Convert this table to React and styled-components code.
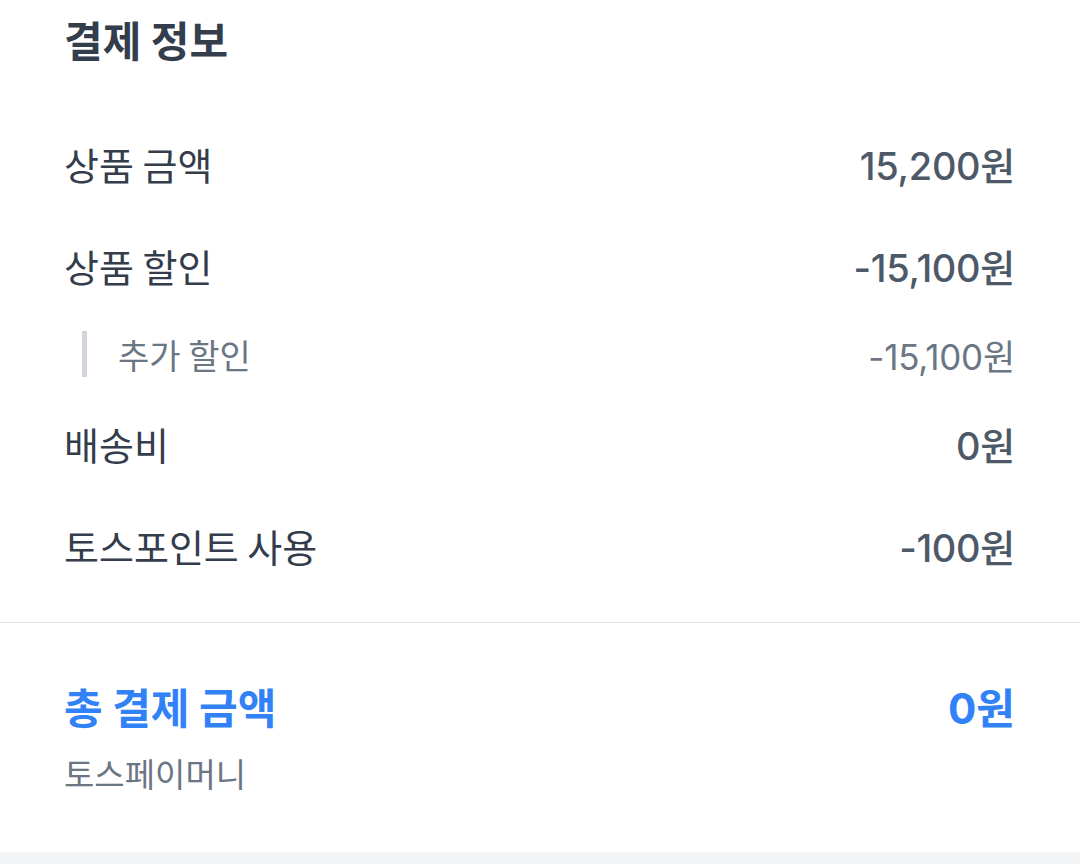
import React from "react";
import styled, { createGlobalStyle } from "styled-components";

const GlobalStyle = createGlobalStyle`
  body {
    margin: 0;
    background: #ffffff;
    font-family: "Noto Sans CJK KR", "Noto Sans", sans-serif;
    -webkit-font-smoothing: antialiased;
  }
`;

const numFont = `Inter, "Noto Sans CJK KR", sans-serif`;

const Page = styled.div`
  width: 1080px;
  background: #ffffff;
`;

const Section = styled.section`
  padding: 0 65px 26px 64px;
`;

const Title = styled.h2`
  margin: 0;
  font-size: 42px;
  line-height: 78px;
  font-weight: 700;
  color: #333d4b;
`;

const List = styled.div`
  padding-top: 34px;
  display: flex;
  flex-direction: column;
`;

const Row = styled.div`
  display: flex;
  align-items: center;
  justify-content: space-between;
  height: 102px;
`;

const Label = styled.span`
  font-size: 38px;
  font-weight: 400;
  color: #333d4b;
`;

const Value = styled.span`
  font-family: ${numFont};
  font-size: 38px;
  font-weight: 500;
  color: #4e5968;
  letter-spacing: -0.3px;
`;

const SubRow = styled.div`
  display: flex;
  align-items: center;
  justify-content: space-between;
  height: 76px;
  padding-left: 18px;
`;

const SubLabel = styled.span`
  display: flex;
  align-items: center;
  font-size: 34px;
  color: #6b7684;

  &::before {
    content: "";
    display: block;
    width: 5px;
    height: 46px;
    background: #d1d6db;
    margin-right: 31px;
  }
`;

const SubValue = styled.span`
  font-family: ${numFont};
  font-size: 35px;
  color: #6b7684;
  letter-spacing: -0.2px;
`;

const Divider = styled.hr`
  margin: 0;
  border: 0;
  border-top: 1px solid #e5e8eb;
`;

const Total = styled.section`
  padding: 56px 65px 59px 64px;
`;

const TotalRow = styled.div`
  display: flex;
  align-items: center;
  justify-content: space-between;
  height: 52px;
`;

const TotalText = styled.span`
  font-family: ${(p) => (p.$num ? numFont : "inherit")};
  font-size: 42px;
  font-weight: 700;
  color: #3182f6;
`;

const Method = styled.div`
  margin-top: 22px;
  font-size: 33px;
  line-height: 40px;
  color: #6b7684;
`;

const Gap = styled.div`
  height: 24px;
  background: #f2f4f6;
`;

const rows = [
  { label: "상품 금액", value: "15,200원" },
  { label: "상품 할인", value: "-15,100원", sub: { label: "추가 할인", value: "-15,100원" } },
  { label: "배송비", value: "0원" },
  { label: "토스포인트 사용", value: "-100원" },
];

export default function App() {
  return (
    <Page>
      <GlobalStyle />
      <Section>
        <Title>결제 정보</Title>
        <List>
          {rows.map((r) => (
            <React.Fragment key={r.label}>
              <Row>
                <Label>{r.label}</Label>
                <Value>{r.value}</Value>
              </Row>
              {r.sub && (
                <SubRow>
                  <SubLabel>{r.sub.label}</SubLabel>
                  <SubValue>{r.sub.value}</SubValue>
                </SubRow>
              )}
            </React.Fragment>
          ))}
        </List>
      </Section>
      <Divider />
      <Total>
        <TotalRow>
          <TotalText>총 결제 금액</TotalText>
          <TotalText $num>0원</TotalText>
        </TotalRow>
        <Method>토스페이머니</Method>
      </Total>
      <Gap />
    </Page>
  );
}
